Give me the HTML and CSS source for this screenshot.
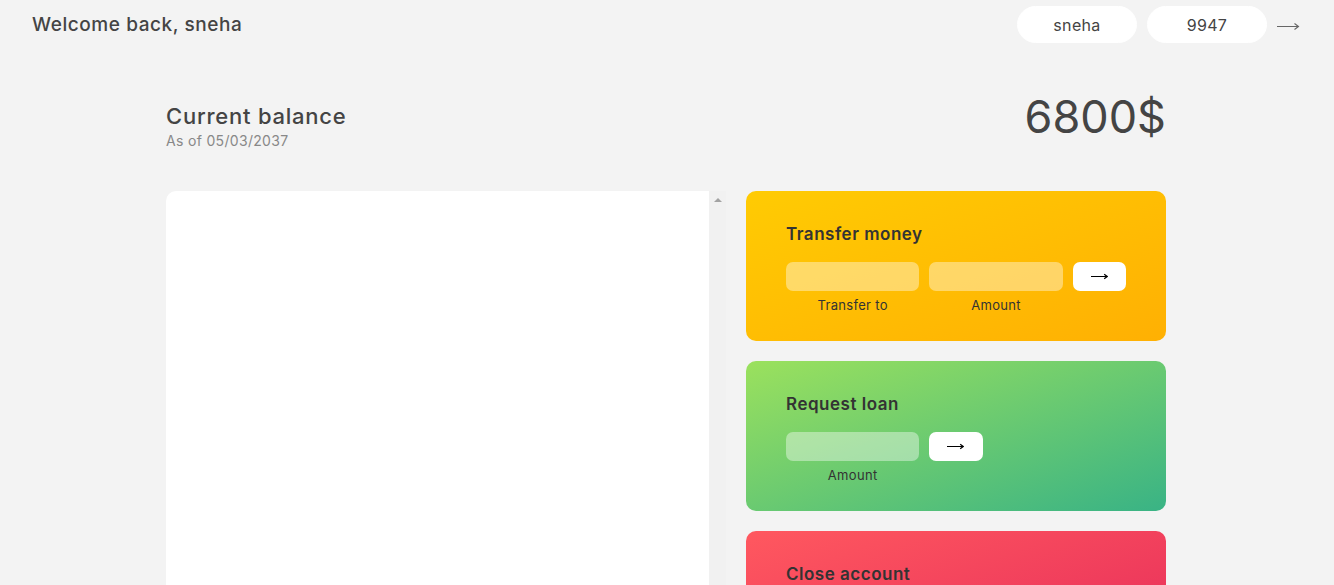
FILE: index.html
```html
<!DOCTYPE html>
<html lang="en">
<head>
<meta charset="UTF-8">
<title>Bankist</title>
<link rel="stylesheet" href="styles.css">
</head>
<body>
<nav class="nav">
  <p class="welcome">Welcome back, sneha</p>
  <form class="login">
    <input type="text" class="login__input" value="sneha">
    <input type="text" class="login__input" value="9947">
    <button class="login__btn" type="button" aria-label="Login">
      <svg width="23" height="11" viewBox="0 0 23 11"><path d="M0 5.5H21.5M17.5 2.5L21.5 5.5L17.5 8.5" fill="none" stroke="#666" stroke-width="1.1"/></svg>
    </button>
  </form>
</nav>
<main class="app">
  <div class="balance">
    <div>
      <p class="balance__label">Current balance</p>
      <p class="balance__date">As of <span>05/03/2037</span></p>
    </div>
    <p class="balance__value">6800$</p>
  </div>
  <div class="movements">
    <div class="movements__list"></div>
    <div class="movements__track"><span class="movements__arrow"></span></div>
  </div>
  <div class="operation operation--transfer">
    <h2>Transfer money</h2>
    <form class="form">
      <input type="text" class="form__input">
      <input type="number" class="form__input">
      <button class="form__btn" type="button" aria-label="Transfer">
        <svg width="17" height="9" viewBox="0 0 17 9"><path d="M0 4.5H16M13.2 2.3L16.2 4.5L13.2 6.7" fill="none" stroke="#000" stroke-width="1.2"/></svg>
      </button>
      <label class="form__label">Transfer to</label>
      <label class="form__label">Amount</label>
    </form>
  </div>
  <div class="operation operation--loan">
    <h2>Request loan</h2>
    <form class="form form--loan">
      <input type="number" class="form__input">
      <button class="form__btn" type="button" aria-label="Request">
        <svg width="17" height="9" viewBox="0 0 17 9"><path d="M0 4.5H16M13.2 2.3L16.2 4.5L13.2 6.7" fill="none" stroke="#000" stroke-width="1.2"/></svg>
      </button>
      <label class="form__label form__label--loan">Amount</label>
    </form>
  </div>
  <div class="operation operation--close">
    <h2>Close account</h2>
  </div>
</main>
</body>
</html>
```

FILE: styles.css
```css
* {
  margin: 0;
  padding: 0;
  box-sizing: border-box;
}

html {
  overflow: hidden;
}

body {
  font-family: "Inter", "Open Sans", sans-serif;
  color: #444;
  background-color: #f3f3f3;
  line-height: 1.5;
  letter-spacing: 0.02em;
}

.nav {
  display: flex;
  justify-content: space-between;
  align-items: center;
  padding: 6px 28px 0 32px;
}

.welcome {
  font-size: 19px;
  font-weight: 500;
  letter-spacing: 0.03em;
  padding-top: 2px;
}

.login {
  display: flex;
  align-items: center;
}

.login__input {
  border: 1px solid #fff;
  background: #fff;
  padding: 5px 20px;
  font-size: 16px;
  line-height: 1.5;
  font-family: inherit;
  letter-spacing: 0.02em;
  text-align: center;
  width: 120px;
  height: 37px;
  border-radius: 100px;
  margin-right: 10px;
  color: inherit;
  outline: none;
}

.login__btn {
  border: none;
  background: none;
  padding: 3px 6px 0 0;
  display: flex;
  align-items: center;
  height: 37px;
}

.app {
  max-width: 1000px;
  margin: 40px auto;
  display: grid;
  grid-template-columns: 4fr 3fr;
  grid-template-rows: auto repeat(3, 150px) auto;
  gap: 20px;
  transform: translateX(-1px);
}

.balance {
  grid-column: 1 / span 2;
  display: flex;
  align-items: flex-end;
  justify-content: space-between;
  margin-bottom: 20px;
}

.balance__label {
  font-size: 22px;
  font-weight: 500;
  letter-spacing: 0.035em;
  margin-bottom: -3px;
}

.balance__date {
  font-size: 14px;
  color: #888;
}

.balance__value {
  font-size: 45px;
  font-weight: 400;
  letter-spacing: 0;
}

.movements {
  grid-row: 2 / span 3;
  display: flex;
}

.movements__list {
  flex: 1;
  background-color: #fff;
  border-radius: 10px 0 0 10px;
}

.movements__track {
  width: 17px;
  background-color: #f1f1f1;
  display: flex;
  justify-content: center;
  padding-top: 7px;
}

.movements__arrow {
  width: 0;
  height: 0;
  border-left: 4px solid transparent;
  border-right: 4px solid transparent;
  border-bottom: 4px solid #a3a3a3;
}

.operation {
  border-radius: 10px;
  padding: 31px 40px 30px;
  color: #333;
}

.operation--transfer {
  background-image: linear-gradient(to top left, #ffb003, #ffcb03);
}

.operation--loan {
  background-image: linear-gradient(to top left, #39b385, #9be15d);
}

.operation--close {
  background-image: linear-gradient(to top left, #e52a5a, #ff585f);
}

h2 {
  margin-bottom: 15px;
  font-size: 17px;
  font-weight: 600;
  letter-spacing: 0.03em;
  color: #333;
}

.form {
  display: grid;
  grid-template-columns: 2.5fr 2.5fr 1fr;
  grid-template-rows: 29px auto;
  gap: 4px 10px;
}

.form--loan {
  grid-template-columns: 2.5fr 1fr 2.5fr;
}

.form__label--loan {
  grid-row: 2;
}

.form__input {
  width: 100%;
  border: none;
  background-color: rgba(255, 255, 255, 0.4);
  font-family: inherit;
  font-size: 15px;
  text-align: center;
  color: #333;
  padding: 3px 10px;
  border-radius: 7px;
  outline: none;
}

.form__label {
  font-size: 13px;
  text-align: center;
  padding-top: 1px;
}

.form__btn {
  border: none;
  border-radius: 7px;
  background-color: #fff;
  display: flex;
  align-items: center;
  justify-content: center;
}
```
